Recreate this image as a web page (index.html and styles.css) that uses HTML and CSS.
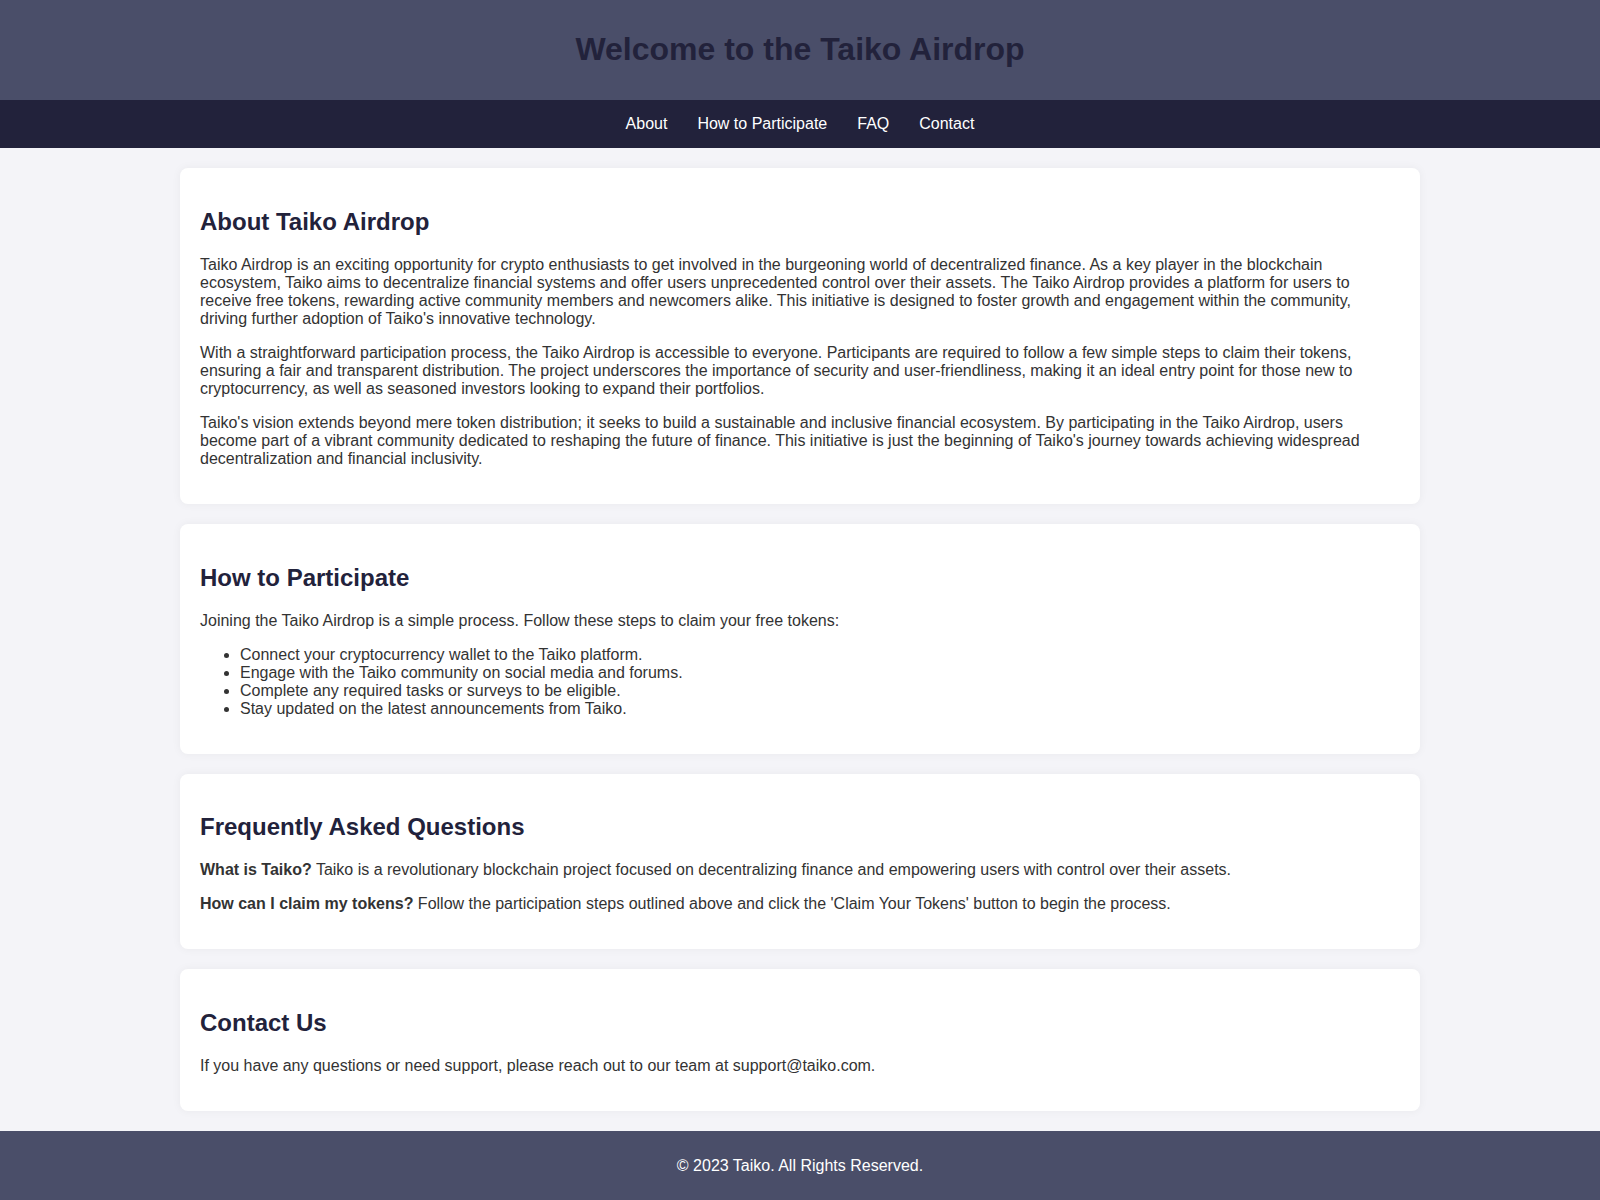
FILE: index.html
```html
<!DOCTYPE html>
<html lang="en">
<head>
    <meta charset="UTF-8">
    <meta name="viewport" content="width=device-width, initial-scale=1.0">
    <title>Taiko Airdrop</title>
    <link rel="stylesheet" href="styles.css">
</head>
<body>
    <header class="site-header">
        <h1>Welcome to the Taiko Airdrop</h1>
    </header>

    <nav class="site-nav">
        <a href="#about">About</a>
        <a href="#participate">How to Participate</a>
        <a href="#faq">FAQ</a>
        <a href="#contact">Contact</a>
    </nav>

    <main class="content">
        <section class="card" id="about">
            <h2>About Taiko Airdrop</h2>
            <p>Taiko Airdrop is an exciting opportunity for crypto enthusiasts to get involved in the burgeoning world of decentralized finance. As a key player in the blockchain ecosystem, Taiko aims to decentralize financial systems and offer users unprecedented control over their assets. The Taiko Airdrop provides a platform for users to receive free tokens, rewarding active community members and newcomers alike. This initiative is designed to foster growth and engagement within the community, driving further adoption of Taiko's innovative technology.</p>
            <p>With a straightforward participation process, the Taiko Airdrop is accessible to everyone. Participants are required to follow a few simple steps to claim their tokens, ensuring a fair and transparent distribution. The project underscores the importance of security and user-friendliness, making it an ideal entry point for those new to cryptocurrency, as well as seasoned investors looking to expand their portfolios.</p>
            <p>Taiko's vision extends beyond mere token distribution; it seeks to build a sustainable and inclusive financial ecosystem. By participating in the Taiko Airdrop, users become part of a vibrant community dedicated to reshaping the future of finance. This initiative is just the beginning of Taiko's journey towards achieving widespread decentralization and financial inclusivity.</p>
        </section>

        <section class="card" id="participate">
            <h2>How to Participate</h2>
            <p>Joining the Taiko Airdrop is a simple process. Follow these steps to claim your free tokens:</p>
            <ul>
                <li>Connect your cryptocurrency wallet to the Taiko platform.</li>
                <li>Engage with the Taiko community on social media and forums.</li>
                <li>Complete any required tasks or surveys to be eligible.</li>
                <li>Stay updated on the latest announcements from Taiko.</li>
            </ul>
        </section>

        <section class="card" id="faq">
            <h2>Frequently Asked Questions</h2>
            <p><strong>What is Taiko?</strong> Taiko is a revolutionary blockchain project focused on decentralizing finance and empowering users with control over their assets.</p>
            <p><strong>How can I claim my tokens?</strong> Follow the participation steps outlined above and click the 'Claim Your Tokens' button to begin the process.</p>
        </section>

        <section class="card" id="contact">
            <h2>Contact Us</h2>
            <p>If you have any questions or need support, please reach out to our team at support@taiko.com.</p>
        </section>
    </main>

    <footer class="site-footer">
        <p>&copy; 2023 Taiko. All Rights Reserved.</p>
    </footer>
</body>
</html>
```

FILE: styles.css
```css
body {
    margin: 0;
    font-family: 'Liberation Sans', Arial, sans-serif;
    background-color: #f4f4f8;
    color: #333;
}

/* Header */
.site-header {
    background-color: #4a4e69;
    text-align: center;
    padding: 10px 0;
}

.site-header h1 {
    color: #22223b;
    font-size: 2em;
    margin: 0.67em 0;
}

/* Navigation */
.site-nav {
    background-color: #22223b;
    display: flex;
    justify-content: center;
    padding: 15px 0;
}

.site-nav a {
    color: white;
    text-decoration: none;
    margin: 0 15px;
}

/* Main content */
.content {
    max-width: 1240px;
    margin: 0 auto;
    padding: 20px 0;
    display: flex;
    flex-direction: column;
    gap: 20px;
}

.card {
    background-color: white;
    padding: 20px;
    border-radius: 8px;
    box-shadow: 0 0 10px rgba(0, 0, 0, 0.05);
}

.card h2 {
    color: #22223b;
    font-size: 1.5em;
    margin: 0.83em 0;
}

/* Footer */
.site-footer {
    background-color: #4a4e69;
    color: white;
    text-align: center;
    padding: 10px 0;
}
```
